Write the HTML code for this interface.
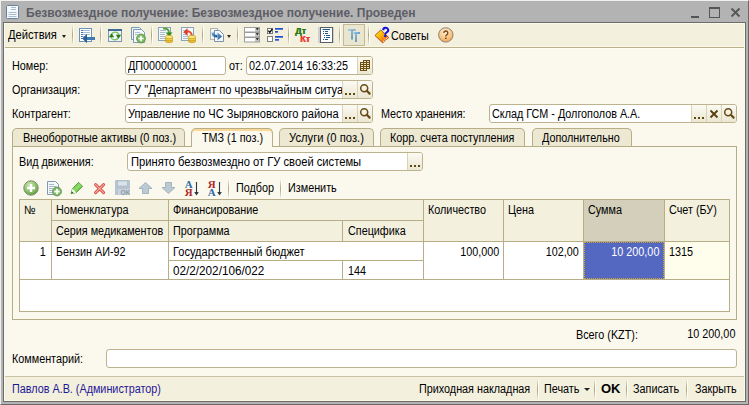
<!DOCTYPE html>
<html><head><meta charset="utf-8">
<style>
*{box-sizing:border-box;margin:0;padding:0}
html,body{width:749px;height:405px;overflow:hidden;background:#b3b3b3}
body{position:relative;font-family:"Liberation Sans",sans-serif;font-size:11px;color:#000}
.a{position:absolute}
.t{position:absolute;white-space:nowrap;line-height:13px;font-size:12px;transform:scaleX(0.9);transform-origin:0 0}
.tr{transform-origin:100% 0}
#frame{left:0;top:0;width:749px;height:405px;background:#b3b3b3;border-top:1px solid #f0f0f0;border-left:1px solid #f0f0f0;border-right:1px solid #6a6a6a;border-bottom:1px solid #6a6a6a}
#content{left:3px;top:22px;width:743px;height:380px;border:1px solid #6c6c6c;background:#fbf9ee}
#hl{left:4px;top:23px;width:741px;height:378px;border:1px solid #fcfae6}
#tb{left:5px;top:24px;width:739px;height:22px;background:#f3f0de}
.sep{position:absolute;width:2px;background:linear-gradient(to bottom,rgba(160,150,110,0.15),rgba(160,150,110,0.85) 50%,rgba(160,150,110,0.15)) 0 0/1px 100% no-repeat,linear-gradient(#fffef6,#fffef6) 1px 0/1px 100% no-repeat}
.box{position:absolute;background:#fff;border:1px solid #bdb38f;border-radius:3px;overflow:hidden}
.btn{position:absolute;top:0;bottom:0;width:15px;border-left:1px solid #d9d2b4;background:linear-gradient(#fbfaf3,#ece7d2)}
.dots{position:absolute;left:2px;top:12px;width:2px;height:2px;background:#5e4a14;box-shadow:4px 0 0 #5e4a14,8px 0 0 #5e4a14}
.ic{position:absolute;left:0;top:0}
.tab{position:absolute;top:128px;height:18px;background:#ece8d2;border:1px solid #b7ae88;border-bottom:none;border-radius:5px 5px 0 0}
.tab.act{height:19px;background:#fbf9ee;box-shadow:inset 0 2px 0 #fad89a}
</style></head><body>
<div id="frame" class="a"></div>
<!-- title -->
<svg class="a" style="left:6px;top:5px" width="14" height="15" viewBox="0 0 14 15">
<rect x="0.5" y="0.5" width="12" height="13" rx="1" fill="#f6f9fc" stroke="#6a8299"/>
<path d="M5 2.5h5M5 4.5h5M2.5 7.5h8M2.5 9.5h8M2.5 11.5h8" stroke="#a6bccf" stroke-width="1"/>
</svg>
<div class="t" style="left:26px;top:7px;font-size:12px;font-weight:bold;color:#5d5d66;transform:none">Безвозмездное получение: Безвозмездное получение. Проведен</div>
<div class="a" style="left:691px;top:16px;width:8px;height:2px;background:#555"></div>
<div class="a" style="left:709px;top:7px;width:11px;height:11px;border:1px solid #555;border-top-width:2px"></div>
<svg class="a" style="left:730px;top:7px" width="11" height="11" viewBox="0 0 11 11"><path d="M1.5 1.5L9.5 9.5M9.5 1.5L1.5 9.5" stroke="#555" stroke-width="1.8"/></svg>

<div id="content" class="a"></div>
<div id="hl" class="a"></div>
<div id="tb" class="a"></div>
<div class="a" style="left:5px;top:46px;width:739px;height:1px;background:#fbf9ec"></div>
<div class="a" style="left:5px;top:47px;width:739px;height:1px;background:#b9b08a"></div>
<div class="a" style="left:5px;top:48px;width:739px;height:1px;background:#fffef6"></div>

<!-- toolbar -->
<div class="t" style="left:8px;top:29px;transform:scaleX(0.93)">Действия</div>
<div class="a" style="left:62px;top:35px;width:0;height:0;border-left:2.5px solid transparent;border-right:2.5px solid transparent;border-top:3px solid #222"></div>
<div class="sep" style="left:72px;top:26px;height:18px"></div>
<div class="sep" style="left:100px;top:26px;height:18px"></div>
<div class="sep" style="left:151px;top:26px;height:18px"></div>
<div class="sep" style="left:202px;top:26px;height:18px"></div>
<div class="sep" style="left:237px;top:26px;height:18px"></div>
<div class="sep" style="left:288px;top:26px;height:18px"></div>
<div class="sep" style="left:339px;top:26px;height:18px"></div>
<div class="sep" style="left:368px;top:26px;height:18px"></div>


<!-- toolbar icons -->
<svg class="a" style="left:78px;top:27px" width="18" height="17" viewBox="0 0 18 17">
<rect x="1.5" y="1.5" width="12" height="13" fill="#fff" stroke="#6b93b8"/>
<path d="M5 3.5h7M5 5.5h7M5 7.5h7M5 9.5h2M5 11.5h2" stroke="#a9bccd"/>
<path d="M3 3.5h2M3 5.5h2M3 7.5h2M3 9.5h2M3 11.5h2" stroke="#3f78b5"/>
<path d="M4.5 11.5L9 7V10H17V13H9V16Z" fill="#3d7ab2"/><path d="M4.5 11.5L9 7V16Z" fill="#2a5f95"/>
</svg>
<svg class="a" style="left:107px;top:28px" width="16" height="15" viewBox="0 0 16 15">
<rect x="1.5" y="1.5" width="13" height="12" fill="#eef4f8" stroke="#7f98ad"/>
<rect x="1" y="1" width="14" height="2" fill="#3f6b92"/>
<path d="M4.5 7Q5.5 4 8.5 4.2T12 7" stroke="#7cc060" stroke-width="1.2" fill="none"/>
<path d="M11.5 9Q10.5 12 7.5 11.8T4 9" stroke="#7cc060" stroke-width="1.2" fill="none"/>
<path d="M1.8 9.2h5.4L4.5 5.2z" fill="#2a7a18"/>
<path d="M8.8 6.8h5.4L11.5 10.8z" fill="#2a7a18"/>
</svg>
<svg class="a" style="left:130px;top:26px" width="18" height="18" viewBox="0 0 18 18">
<path d="M1.5 1.5h8l2 2v10h-10z" fill="#eef3f8" stroke="#7d9ab3"/>
<path d="M3.5 3.5h8l3 3v10h-11z" fill="#f6f9fc" stroke="#7d9ab3"/>
<path d="M5 6.5h5M5 8.5h3" stroke="#a9bccd"/>
<circle cx="11" cy="12.5" r="4.4" fill="#7cb862" stroke="#5a9444" stroke-width="0.9"/>
<path d="M11 9.8v5.4M8.3 12.5h5.4" stroke="#fff" stroke-width="1.7"/>
</svg>
<svg class="a" style="left:157px;top:26px" width="17" height="18" viewBox="0 0 17 18">
<rect x="1.5" y="1.5" width="12" height="13" fill="#f4f8fb" stroke="#8aa4ba"/>
<path d="M3 4.5h6M3 6.5h5M3 8.5h5M3 10.5h5M3 12.5h5" stroke="#a9bccd"/>
<path d="M6 2.5Q12 2 12 7" stroke="#5aa43a" stroke-width="2" fill="none"/>
<path d="M8.5 6.5h7l-3.5 4z" fill="#2f8a1e"/>
<ellipse cx="12" cy="15" rx="3.8" ry="1.7" fill="#e8c030" stroke="#c09018" stroke-width="0.6"/>
<ellipse cx="12" cy="13" rx="3.8" ry="1.7" fill="#f2d040" stroke="#c09018" stroke-width="0.6"/>
<ellipse cx="12" cy="11" rx="3.8" ry="1.7" fill="#fae878" stroke="#c09018" stroke-width="0.6"/>
</svg>
<svg class="a" style="left:180px;top:26px" width="17" height="18" viewBox="0 0 17 18">
<rect x="1.5" y="1.5" width="12" height="13" fill="#f4f8fb" stroke="#8aa4ba"/>
<path d="M3 4.5h6M3 6.5h5M3 8.5h5M3 10.5h5M3 12.5h5" stroke="#a9bccd"/>
<path d="M6 6Q11 4 12 10" stroke="#e45030" stroke-width="2" fill="none"/>
<path d="M3.5 6l4-4v8z" fill="#e23a22"/>
<ellipse cx="12" cy="15" rx="3.8" ry="1.7" fill="#e8c030" stroke="#c09018" stroke-width="0.6"/>
<ellipse cx="12" cy="13" rx="3.8" ry="1.7" fill="#f2d040" stroke="#c09018" stroke-width="0.6"/>
<ellipse cx="12" cy="11" rx="3.8" ry="1.7" fill="#fae878" stroke="#c09018" stroke-width="0.6"/>
</svg>
<svg class="a" style="left:207px;top:25px" width="20" height="20" viewBox="0 0 20 20">
<defs><linearGradient id="ag" x1="0" y1="0" x2="1" y2="1"><stop offset="0" stop-color="#6aa8dc"/><stop offset="1" stop-color="#1d4f80"/></linearGradient></defs>
<rect x="3.5" y="3.5" width="7" height="11" fill="#f2f4f6" stroke="#b2b2aa"/>
<path d="M7.5 5.5h5l4 4v7h-9z" fill="#f4f8fb" stroke="#7893aa"/>
<path d="M5.8 7.5Q5.8 11.3 10.5 11.3" stroke="url(#ag)" stroke-width="2.6" fill="none"/>
<path d="M10.4 7.2L15 11.4 10.6 15.2z" fill="url(#ag)"/>
</svg>
<div class="a" style="left:227px;top:35px;width:0;height:0;border-left:2.5px solid transparent;border-right:2.5px solid transparent;border-top:3px solid #3a2a0a"></div>
<svg class="a" style="left:244px;top:27px" width="17" height="16" viewBox="0 0 17 16">
<rect x="0" y="0" width="16" height="15.5" fill="#9c9c9c"/>
<g fill="#fff"><rect x="1" y="1" width="10.5" height="3.5"/><rect x="1" y="6" width="10.5" height="3.5"/><rect x="1" y="11" width="10.5" height="3.5"/></g>
<g fill="#c4c4c4"><rect x="11.5" y="1" width="3.5" height="3.5"/><rect x="11.5" y="6" width="3.5" height="3.5"/><rect x="11.5" y="11" width="3.5" height="3.5"/></g>
<g fill="#111"><path d="M11.8 1.2h3l-1.5 2z"/><path d="M11.8 6.2h3l-1.5 2z"/><path d="M11.8 11.2h3l-1.5 2z"/></g>
</svg>
<svg class="a" style="left:267px;top:28px" width="17" height="15" viewBox="0 0 17 15">
<rect x="0.5" y="0.5" width="5" height="5" fill="#fff" stroke="#7a7a7a"/>
<path d="M1.4 2.6l1.4 1.8 2.6-3.6" stroke="#000" stroke-width="1.3" fill="none"/>
<rect x="0.5" y="8.5" width="5" height="5" fill="#fff" stroke="#808080"/>
<rect x="8" y="0" width="8" height="1.7" fill="#1f50cf"/><rect x="8" y="3" width="3" height="1.7" fill="#1f50cf"/>
<rect x="8" y="8" width="8" height="1.7" fill="#1f50cf"/><rect x="8" y="11" width="4" height="1.7" fill="#1f50cf"/>
</svg>
<div class="a" style="left:295px;top:27px;font:bold 9px 'Liberation Sans',sans-serif;color:#2b7a12;line-height:9px;text-shadow:0.5px 0 0 #2b7a12">Дт</div>
<div class="a" style="left:300px;top:35px;font:bold 9px 'Liberation Sans',sans-serif;color:#f03a34;line-height:9px;text-shadow:0.5px 0 0 #f03a34">Кт</div>
<svg class="a" style="left:318px;top:27px" width="16" height="16" viewBox="0 0 16 16">
<rect x="0" y="0" width="16" height="16" fill="#cfcfcf"/>
<rect x="2.5" y="0.5" width="12" height="15" fill="#fff" stroke="#5a6068"/>
<g stroke="#1f5a8a" stroke-width="1.1">
<path d="M4.5 2.5h7.5"/>
<path d="M5 4.5h1M5 6.5h1M6 8.5h1M6 10.5h1M5 12.5h1"/>
<path d="M7 4.5h3M7 6.5h3M8 8.5h4M8 10.5h4M7 12.5h3"/>
</g>
</svg>
<div class="a" style="left:343px;top:24px;width:22px;height:22px;background:#eae5cf;border:1px solid #c2b996"></div>
<svg class="a" style="left:348px;top:29px" width="13" height="14" viewBox="0 0 13 14">
<defs><linearGradient id="tg" x1="0" y1="0" x2="1" y2="1"><stop offset="0" stop-color="#8cc4e8"/><stop offset="1" stop-color="#3f7fa8"/></linearGradient></defs>
<path d="M0 1h7.6M4 1v9.5" stroke="url(#tg)" stroke-width="1.7"/>
<path d="M5.7 4h6.3M8 4v9" stroke="url(#tg)" stroke-width="1.8"/>
</svg>
<svg class="a" style="left:372px;top:24px" width="20" height="22" viewBox="0 0 20 22">
<defs><linearGradient id="bk" x1="0" y1="0" x2="1" y2="1"><stop offset="0.15" stop-color="#ffe60a"/><stop offset="0.8" stop-color="#f26a12"/></linearGradient></defs>
<path d="M3 11.5L8.7 6 16.8 13.6 10.6 18.8z" fill="url(#bk)" stroke="#a8400a" stroke-width="0.9"/>
<path d="M11.3 17.6L16 13.4" stroke="#fff" stroke-width="1.3" stroke-dasharray="1 0.9"/>
<path d="M11.2 6.2a2.5 2.4 0 1 1 3.4 2.2c-.9.4-1.3.9-1.3 2" stroke="#1010e0" stroke-width="2" fill="none"/>
<rect x="12.2" y="11" width="2.1" height="2" fill="#1010e0"/>
</svg>
<div class="t" style="left:391px;top:30px">Советы</div>
<svg class="a" style="left:437px;top:27px" width="17" height="17" viewBox="0 0 17 17">
<defs><radialGradient id="hg" cx="0.45" cy="0.3" r="0.75"><stop offset="0" stop-color="#fff0d8"/><stop offset="0.55" stop-color="#fac888"/><stop offset="1" stop-color="#eca048"/></radialGradient></defs>
<circle cx="8.8" cy="7.9" r="7.2" fill="url(#hg)" stroke="#8f8478" stroke-width="1"/>
<path d="M6.8 6a2 2 0 1 1 2.9 1.8c-.7.4-.9.8-.9 1.6" stroke="#7a4a1e" stroke-width="1.4" fill="none"/>
<rect x="8" y="10.6" width="1.6" height="1.4" fill="#7a4a1e"/>
</svg>

<!-- header form -->
<div class="t" style="left:12px;top:60px">Номер:</div>
<div class="box" style="left:125px;top:56px;width:101px;height:19px"></div>
<div class="t" style="left:128px;top:60px">ДП000000001</div>
<div class="t" style="left:229px;top:60px">от:</div>
<div class="box" style="left:246px;top:56px;width:127px;height:19px"><div class="btn" style="right:0"><svg class="ic" width="15" height="17" viewBox="0 0 15 17"><path d="M5 3h7v2h0v7h-3v2h-7v-9h3z" fill="#6a4e10"/>
<g fill="#efe6c4"><rect x="6" y="4" width="2" height="1"/><rect x="9" y="4" width="2" height="1"/>
<rect x="3" y="6" width="2" height="1"/><rect x="6" y="6" width="2" height="1"/><rect x="9" y="6" width="2" height="1"/>
<rect x="3" y="8" width="2" height="1"/><rect x="6" y="8" width="2" height="1"/><rect x="9" y="8" width="2" height="1"/>
<rect x="3" y="10" width="2" height="1"/><rect x="6" y="10" width="2" height="1"/><rect x="9" y="10" width="2" height="1"/>
<rect x="3" y="12" width="2" height="1"/><rect x="6" y="12" width="2" height="1"/></g></svg></div></div>
<div class="t" style="left:249px;top:60px">02.07.2014 16:33:25</div>

<div class="t" style="left:12px;top:84px">Организация:</div>
<div class="box" style="left:125px;top:80px;width:248px;height:19px"><div class="btn" style="right:15px"><div class="dots"></div></div><div class="btn" style="right:0"><svg class="ic" width="15" height="17" viewBox="0 0 15 17"><circle cx="6.2" cy="7.2" r="3.5" fill="none" stroke="#654c14" stroke-width="1.5"/><path d="M8.8 9.8L11.6 12.6" stroke="#654c14" stroke-width="2.2" stroke-linecap="round"/></svg></div></div>
<div class="t" style="left:128px;top:84px;width:231px;overflow:hidden;transform:scaleX(0.927)">ГУ "Департамент по чрезвычайным ситуациям</div>

<div class="t" style="left:12px;top:108px">Контрагент:</div>
<div class="box" style="left:125px;top:104px;width:248px;height:19px"><div class="btn" style="right:15px"><div class="dots"></div></div><div class="btn" style="right:0"><svg class="ic" width="15" height="17" viewBox="0 0 15 17"><circle cx="6.2" cy="7.2" r="3.5" fill="none" stroke="#654c14" stroke-width="1.5"/><path d="M8.8 9.8L11.6 12.6" stroke="#654c14" stroke-width="2.2" stroke-linecap="round"/></svg></div></div>
<div class="t" style="left:128px;top:108px;width:231px;overflow:hidden;transform:scaleX(0.927)">Управление по ЧС Зыряновского района</div>

<div class="t" style="left:381px;top:108px">Место хранения:</div>
<div class="box" style="left:489px;top:104px;width:248px;height:19px"><div class="btn" style="right:30px"><div class="dots"></div></div><div class="btn" style="right:15px"><svg class="ic" width="15" height="17" viewBox="0 0 15 17"><path d="M3.5 5.5L10.5 12.5M10.5 5.5L3.5 12.5" stroke="#5a4210" stroke-width="1.9"/></svg></div><div class="btn" style="right:0"><svg class="ic" width="15" height="17" viewBox="0 0 15 17"><circle cx="6.2" cy="7.2" r="3.5" fill="none" stroke="#654c14" stroke-width="1.5"/><path d="M8.8 9.8L11.6 12.6" stroke="#654c14" stroke-width="2.2" stroke-linecap="round"/></svg></div></div>
<div class="t" style="left:492px;top:108px">Склад ГСМ - Долгополов А.А.</div>


<!-- tabs -->
<div class="a" style="left:12px;top:146px;width:725px;height:174px;border:1px solid #b7ae88;background:#fbf9ee"></div>
<div class="tab" style="left:12px;width:173px"></div>
<div class="t" style="left:23px;top:132px;transform:scaleX(0.912)">Внеоборотные активы (0 поз.)</div>
<div class="tab act" style="left:191px;width:82px"></div>
<div class="t" style="left:202px;top:132px">ТМЗ (1 поз.)</div>
<div class="tab" style="left:279px;width:95px"></div>
<div class="t" style="left:289px;top:132px;transform:scaleX(0.935)">Услуги (0 поз.)</div>
<div class="tab" style="left:380px;width:145px"></div>
<div class="t" style="left:390px;top:132px">Корр. счета поступления</div>
<div class="tab" style="left:532px;width:100px"></div>
<div class="t" style="left:542px;top:132px">Дополнительно</div>

<div class="t" style="left:19px;top:156px">Вид движения:</div>
<div class="box" style="left:127px;top:152px;width:296px;height:19px"><div class="btn" style="right:0"><div class="dots"></div></div></div>
<div class="t" style="left:131px;top:156px;transform:scaleX(0.932)">Принято безвозмездно от ГУ своей системы</div>

<!-- table toolbar -->

<!-- table toolbar icons -->
<svg class="a" style="left:23px;top:180px" width="16" height="16" viewBox="0 0 16 16">
<defs><radialGradient id="gg" cx="0.4" cy="0.3" r="0.75"><stop offset="0" stop-color="#cfe8b0"/><stop offset="0.6" stop-color="#8cc068"/><stop offset="1" stop-color="#5c9a3c"/></radialGradient></defs>
<circle cx="8" cy="8" r="7.2" fill="url(#gg)" stroke="#7d8a70" stroke-width="1"/>
<path d="M8 4v8M4 8h8" stroke="#fff" stroke-width="2.4"/>
</svg>
<svg class="a" style="left:47px;top:180px" width="16" height="17" viewBox="0 0 16 17">
<path d="M0.5 1.5h8l3 3v10h-11z" fill="#f4f8fb" stroke="#7f9ab2"/>
<path d="M2 4.5h5M2 6.5h7M2 8.5h5M2 10.5h4M2 12.5h4" stroke="#a9bccd"/>
<circle cx="10" cy="11.5" r="4.4" fill="#7cbc60" stroke="#5f8a52" stroke-width="0.9"/>
<path d="M10 8.8v5.4M7.3 11.5h5.4" stroke="#fff" stroke-width="1.8"/>
</svg>
<svg class="a" style="left:70px;top:181px" width="14" height="14" viewBox="0 0 14 14">
<defs><linearGradient id="pg" x1="0" y1="0" x2="1" y2="1"><stop offset="0" stop-color="#3aa020"/><stop offset="0.5" stop-color="#8ee068"/><stop offset="1" stop-color="#2a8a18"/></linearGradient></defs>
<path d="M1 12.8L2.4 7.8L8.6 1.3L12.7 5.4L6.3 11.6Z" fill="url(#pg)" stroke="#2a7a14" stroke-width="0.6"/>
<path d="M1 12.8L2.4 7.8L6.3 11.6Z" fill="#f4fff0"/>
<path d="M1 12.8L1.7 10.3L3.5 12.1Z" fill="#1a5010"/>
</svg>
<svg class="a" style="left:93px;top:182px" width="13" height="13" viewBox="0 0 13 13">
<path d="M2.6 2.6L10.6 10.6M10.6 2.6L2.6 10.6" stroke="#dc4a44" stroke-width="2.9" stroke-linecap="round"/>
<path d="M2.6 2.6L10.6 10.6M10.6 2.6L2.6 10.6" stroke="#f6b4aa" stroke-width="1.1" stroke-linecap="round"/>
</svg>
<svg class="a" style="left:115px;top:180px" width="15" height="15" viewBox="0 0 15 15">
<rect x="0" y="0" width="15" height="15" rx="1" fill="#b7c4d0"/>
<rect x="2.5" y="1" width="10" height="5" fill="#dbe3ea" stroke="#a4b2bf" stroke-width="0.6"/>
<rect x="3" y="9" width="12" height="6" fill="#c8d2dc"/>
<text x="5.5" y="14.5" font-family="Liberation Sans" font-weight="bold" font-size="6.5" fill="#8a9aaa">OK</text>
</svg>
<svg class="a" style="left:138px;top:182px" width="15" height="12" viewBox="0 0 15 12">
<path d="M7.5 0.5L14 6.5H10.5V11.5H4.5V6.5H1z" fill="#bccad4" stroke="#9eaebb" stroke-width="0.9" stroke-linejoin="round"/>
</svg>
<svg class="a" style="left:161px;top:182px" width="15" height="12" viewBox="0 0 15 12">
<path d="M7.5 11.5L14 5.5H10.5V0.5H4.5V5.5H1z" fill="#bccad4" stroke="#9eaebb" stroke-width="0.9" stroke-linejoin="round"/>
</svg>
<svg class="a" style="left:184px;top:180px" width="17" height="17" viewBox="0 0 17 17">
<g font-family="Liberation Serif" font-weight="bold" font-size="9.5" transform="scale(1.15 1)" stroke="none">
<text x="0.6" y="7.8" fill="#2f6aa8">A</text>
<text x="0.6" y="15.8" fill="#b02828">Я</text></g>
<path d="M12.5 2v11" stroke="#2a3848" stroke-width="1.1"/><path d="M10.2 12l2.3 3.4 2.3-3.4z" fill="#2a3848"/>
</svg>
<svg class="a" style="left:207px;top:180px" width="17" height="17" viewBox="0 0 17 17">
<g font-family="Liberation Serif" font-weight="bold" font-size="9.5" transform="scale(1.15 1)" stroke="none">
<text x="0.6" y="7.8" fill="#b02828">Я</text>
<text x="0.6" y="15.8" fill="#2f6aa8">A</text></g>
<path d="M12.5 2v11" stroke="#2a3848" stroke-width="1.1"/><path d="M10.2 12l2.3 3.4 2.3-3.4z" fill="#2a3848"/>
</svg>
<div class="sep" style="left:228px;top:180px;height:18px"></div>
<div class="t" style="left:236px;top:182px">Подбор</div>
<div class="sep" style="left:280px;top:180px;height:18px"></div>
<div class="t" style="left:288px;top:182px">Изменить</div>

<!-- table -->
<div class="a" style="left:19px;top:199px;width:711px;height:113px;border:1px solid #b7ae88;background:#fff"></div>
<div class="a" style="left:20px;top:200px;width:709px;height:41px;background:#f3f0de"></div>
<div class="a" style="left:584px;top:200px;width:80px;height:41px;background:#d3cfbb"></div>
<div class="a" style="left:584px;top:242px;width:80px;height:37px;background:#5468c2;border:1px dotted #c9a23a"></div>
<div class="a" style="left:665px;top:242px;width:64px;height:37px;background:#fffdeb"></div>
<!-- grid lines -->
<div class="a" style="left:20px;top:241px;width:709px;height:1px;background:#b7ae88"></div>
<div class="a" style="left:20px;top:279px;width:709px;height:1px;background:#b7ae88"></div>
<div class="a" style="left:52px;top:220px;width:372px;height:1px;background:#b7ae88"></div>
<div class="a" style="left:169px;top:260px;width:255px;height:1px;background:#b7ae88"></div>
<div class="a" style="left:51px;top:200px;width:1px;height:79px;background:#b7ae88"></div>
<div class="a" style="left:168px;top:200px;width:1px;height:79px;background:#b7ae88"></div>
<div class="a" style="left:342px;top:220px;width:1px;height:21px;background:#b7ae88"></div>
<div class="a" style="left:342px;top:260px;width:1px;height:19px;background:#b7ae88"></div>
<div class="a" style="left:423px;top:200px;width:1px;height:79px;background:#b7ae88"></div>
<div class="a" style="left:503px;top:200px;width:1px;height:79px;background:#b7ae88"></div>
<div class="a" style="left:583px;top:200px;width:1px;height:79px;background:#b7ae88"></div>
<div class="a" style="left:664px;top:200px;width:1px;height:79px;background:#b7ae88"></div>
<div class="t" style="left:24px;top:204px">№</div>
<div class="t" style="left:56px;top:204px">Номенклатура</div>
<div class="t" style="left:173px;top:204px">Финансирование</div>
<div class="t" style="left:56px;top:225px">Серия медикаментов</div>
<div class="t" style="left:173px;top:225px">Программа</div>
<div class="t" style="left:348px;top:225px">Специфика</div>
<div class="t" style="left:428px;top:204px">Количество</div>
<div class="t" style="left:508px;top:204px">Цена</div>
<div class="t" style="left:588px;top:204px">Сумма</div>
<div class="t" style="left:669px;top:204px">Счет (БУ)</div>
<div class="t tr" style="right:703px;top:246px">1</div>
<div class="t" style="left:56px;top:246px">Бензин АИ-92</div>
<div class="t" style="left:173px;top:246px;transform:scaleX(0.92)">Государственный бюджет</div>
<div class="t" style="left:173px;top:265px;transform:scaleX(0.977)">02/2/202/106/022</div>
<div class="t" style="left:348px;top:265px">144</div>
<div class="t tr" style="right:250px;top:246px">100,000</div>
<div class="t tr" style="right:170px;top:246px">102,00</div>
<div class="t tr" style="right:90px;top:246px;color:#fff">10 200,00</div>
<div class="t" style="left:669px;top:246px">1315</div>

<!-- totals -->
<div class="t" style="left:576px;top:329px">Всего (KZT):</div>
<div class="t tr" style="right:14px;top:328px">10 200,00</div>
<div class="t" style="left:12px;top:353px">Комментарий:</div>
<div class="box" style="left:106px;top:349px;width:631px;height:19px"></div>

<!-- bottom bar -->
<div class="a" style="left:5px;top:376px;width:739px;height:1px;background:#c9c2a2"></div>
<div class="a" style="left:5px;top:377px;width:739px;height:23px;background:#f3f0de"></div>
<div class="t" style="left:12px;top:383px;color:#1f1896">Павлов А.В. (Администратор)</div>
<div class="t" style="left:419px;top:383px">Приходная накладная</div>
<div class="sep" style="left:537px;top:380px;height:19px"></div>
<div class="t" style="left:544px;top:383px">Печать</div>
<div class="a" style="left:584px;top:388px;width:0;height:0;border-left:3px solid transparent;border-right:3px solid transparent;border-top:3px solid #222"></div>
<div class="sep" style="left:594px;top:380px;height:19px"></div>
<div class="t" style="left:601px;top:382px;font-weight:bold;font-size:13px;transform:none">OK</div>
<div class="sep" style="left:626px;top:380px;height:19px"></div>
<div class="t" style="left:633px;top:383px">Записать</div>
<div class="sep" style="left:686px;top:380px;height:19px"></div>
<div class="t" style="left:695px;top:383px">Закрыть</div>
</body></html>
